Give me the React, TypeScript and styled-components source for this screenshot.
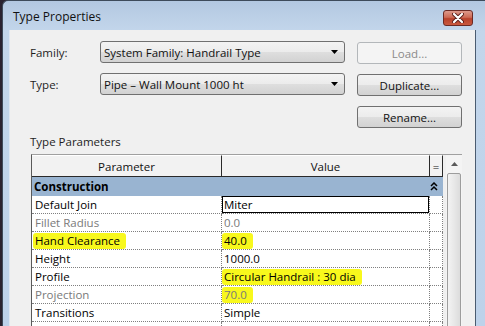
import { Fragment } from "react";
import styled, { createGlobalStyle } from "styled-components";

const GlobalStyle = createGlobalStyle`
  html, body {
    margin: 0;
    padding: 0;
  }
  body {
    width: 485px;
    height: 326px;
    overflow: hidden;
    background: #2a2330;
    font-family: "Open Sans", "Noto Sans", sans-serif;
    font-size: 11.5px;
    color: #000;
  }
  * {
    box-sizing: border-box;
  }
`;

const Window = styled.div`
  margin-left: 2px;
  width: 483px;
  height: 326px;
  overflow: hidden;
  display: flex;
  flex-direction: column;
  background: linear-gradient(180deg, #b3c8e1 0px, #c3d6eb 30px, #bdd2ea 100%);
  border-top: 1px solid #3e4b5b;
  border-left: 1px solid #3e4b5b;
  border-radius: 6px 0 0 0;
`;

const TitleBar = styled.div`
  flex-shrink: 0;
  height: 29px;
  display: flex;
  align-items: flex-start;
  padding-left: 10px;
`;

const Title = styled.div`
  margin-top: 7px;
  font-size: 12px;
  color: #111;
`;

const CloseButton = styled.div`
  margin-left: auto;
  margin-right: 12px;
  margin-top: 9px;
  width: 30px;
  height: 16px;
  border: 1px solid #6b2a24;
  border-radius: 3px;
  background: linear-gradient(180deg, #dd9a8c 0%, #cd6a55 45%, #b8412b 55%, #c9593f 100%);
  display: flex;
  align-items: center;
  justify-content: center;
`;

const Client = styled.div`
  flex: 1 0 auto;
  margin-left: 6px;
  width: 467px;
  background: #f0f0f0;
  border-left: 1px solid #dfe7f1;
  border-right: 1px solid #4b5c70;
  padding: 11px 13px 0 20px;
`;

const TopGrid = styled.div`
  display: grid;
  grid-template-columns: 58px 245px 105px;
  grid-template-rows: 22px 22px 22px;
  column-gap: 12px;
  row-gap: 10px;
`;

const Label = styled.div`
  display: flex;
  align-items: center;
  color: #1e1e1e;
`;

const Select = styled.div`
  display: flex;
  align-items: center;
  justify-content: space-between;
  padding: 0 6px 0 3px;
  border: 1px solid #707070;
  border-radius: 3px;
  background: linear-gradient(180deg, #f3f3f3 0%, #ececec 48%, #dedede 52%, #d2d2d2 100%);
  color: #111;
`;

const Button = styled.div<{ disabled?: boolean; col?: number }>`
  grid-column: ${(p) => p.col ?? 3};
  margin-top: 1px;
  height: 22px;
  display: flex;
  align-items: center;
  justify-content: center;
  border: 1px solid ${(p) => (p.disabled ? "#b3b7ba" : "#707070")};
  border-radius: 3px;
  color: ${(p) => (p.disabled ? "#8a8a8a" : "#111")};
  background: ${(p) =>
    p.disabled
      ? "#f4f4f4"
      : "linear-gradient(180deg, #f3f3f3 0%, #ececec 48%, #dedede 52%, #d2d2d2 100%)"};
`;

const SectionLabel = styled.div`
  margin-top: 7px;
  line-height: 16px;
  height: 16px;
  color: #1e1e1e;
`;

const TableFrame = styled.div`
  margin-top: 4px;
  margin-left: 1px;
  display: flex;
  gap: 3px;
  border-top: 1px solid #a0a0a0;
  border-left: 1px solid #5a5a5a;
  height: 200px;
`;

const Table = styled.div`
  width: 411px;
  display: flex;
  flex-direction: column;
  background: #fff;
`;

const Row = styled.div`
  display: grid;
  grid-template-columns: 190px 208px 13px;
  flex-shrink: 0;
`;

const HeadCell = styled.div`
  height: 22px;
  display: flex;
  align-items: center;
  justify-content: center;
  background: #f2f2f2;
  border-top: 1px solid #ffffff;
  border-right: 1px solid #2a2a2a;
  border-bottom: 1px solid #2a2a2a;
  color: #111;
`;

const GroupRow = styled.div`
  flex-shrink: 0;
  height: 19px;
  display: flex;
  align-items: center;
  justify-content: space-between;
  padding: 0 5px 0 2px;
  background: #99b4d1;
  font-weight: 700;
`;

const Cell = styled.div<{ muted?: boolean; selected?: boolean; pad?: number }>`
  height: 18px;
  display: flex;
  align-items: center;
  padding-left: ${(p) => p.pad ?? 3}px;
  white-space: nowrap;
  overflow: hidden;
  color: ${(p) => (p.muted ? "#7a7a7a" : "#000")};
  border-right: 1px dotted #7f7f7f;
  border-bottom: 1px dotted #7f7f7f;
  box-shadow: ${(p) => (p.selected ? "inset 0 0 0 1px #000" : "none")};
`;

const Mark = styled.span`
  display: inline-block;
  height: 16px;
  line-height: 16px;
  margin-left: -2px;
  padding: 0 6px 0 2px;
  border-radius: 3px;
  background: #f8f81c;
`;

const ScrollBar = styled.div`
  width: 16px;
  display: flex;
  flex-direction: column;
  align-items: center;
  background: #f4f4f4;
`;

const ScrollArrow = styled.div`
  height: 18px;
  display: flex;
  align-items: center;
  justify-content: center;
  width: 100%;
`;

const Thumb = styled.div`
  width: 14px;
  flex: 1;
  border: 1px solid #9d9d9d;
  border-radius: 2px;
  background: linear-gradient(90deg, #f3f3f3 0%, #e8e8e8 50%, #dcdcdc 100%);
`;

const rows: {
  name: string;
  value: string;
  muted?: boolean;
  selected?: boolean;
  markName?: boolean;
  markValue?: boolean;
}[] = [
  { name: "Default Join", value: "Miter", selected: true },
  { name: "Fillet Radius", value: "0.0", muted: true },
  { name: "Hand Clearance", value: "40.0", markName: true, markValue: true },
  { name: "Height", value: "1000.0" },
  { name: "Profile", value: "Circular Handrail : 30 dia", markValue: true },
  { name: "Projection", value: "70.0", muted: true, markValue: true },
  { name: "Transitions", value: "Simple" },
  { name: "", value: "" },
];

function DropArrow() {
  return (
    <svg width="7" height="4" viewBox="0 0 7 4">
      <polygon points="0,0 7,0 3.5,4" fill="#000" />
    </svg>
  );
}

export default function App() {
  return (
    <>
      <GlobalStyle />
      <Window>
        <TitleBar>
          <Title>Type Properties</Title>
          <CloseButton>
            <svg width="12" height="10" viewBox="0 0 12 10">
              <path d="M2 1 L10 9 M10 1 L2 9" stroke="#5a1e1a" strokeWidth="4" strokeLinecap="round" />
              <path d="M2 1 L10 9 M10 1 L2 9" stroke="#fff" strokeWidth="2.2" strokeLinecap="round" />
            </svg>
          </CloseButton>
        </TitleBar>
        <Client>
          <TopGrid>
            <Label>Family:</Label>
            <Select>
              System Family: Handrail Type
              <DropArrow />
            </Select>
            <Button disabled>Load...</Button>
            <Label>Type:</Label>
            <Select>
              Pipe – Wall Mount 1000 ht
              <DropArrow />
            </Select>
            <Button>Duplicate...</Button>
            <Button>Rename...</Button>
          </TopGrid>
          <SectionLabel>Type Parameters</SectionLabel>
          <TableFrame>
            <Table>
              <Row>
                <HeadCell>Parameter</HeadCell>
                <HeadCell>Value</HeadCell>
                <HeadCell>=</HeadCell>
              </Row>
              <GroupRow>
                Construction
                <svg width="8" height="9" viewBox="0 0 8 9">
                  <path d="M1 4 L4 1 L7 4 M1 8 L4 5 L7 8" stroke="#000" strokeWidth="1.5" fill="none" />
                </svg>
              </GroupRow>
              {rows.map((r, i) => (
                <Row key={i}>
                  <Cell muted={r.muted}>
                    {r.markName ? <Mark>{r.name}</Mark> : r.name}
                  </Cell>
                  <Cell muted={r.muted} selected={r.selected} pad={2}>
                    {r.markValue ? <Mark>{r.value}</Mark> : r.value}
                  </Cell>
                  <Cell />
                </Row>
              ))}
            </Table>
            <ScrollBar>
              <ScrollArrow>
                <svg width="7" height="4" viewBox="0 0 7 4">
                  <polygon points="0,4 3.5,0 7,4" fill="#5a5a5a" />
                </svg>
              </ScrollArrow>
              <Thumb />
            </ScrollBar>
          </TableFrame>
        </Client>
      </Window>
    </>
  );
}
